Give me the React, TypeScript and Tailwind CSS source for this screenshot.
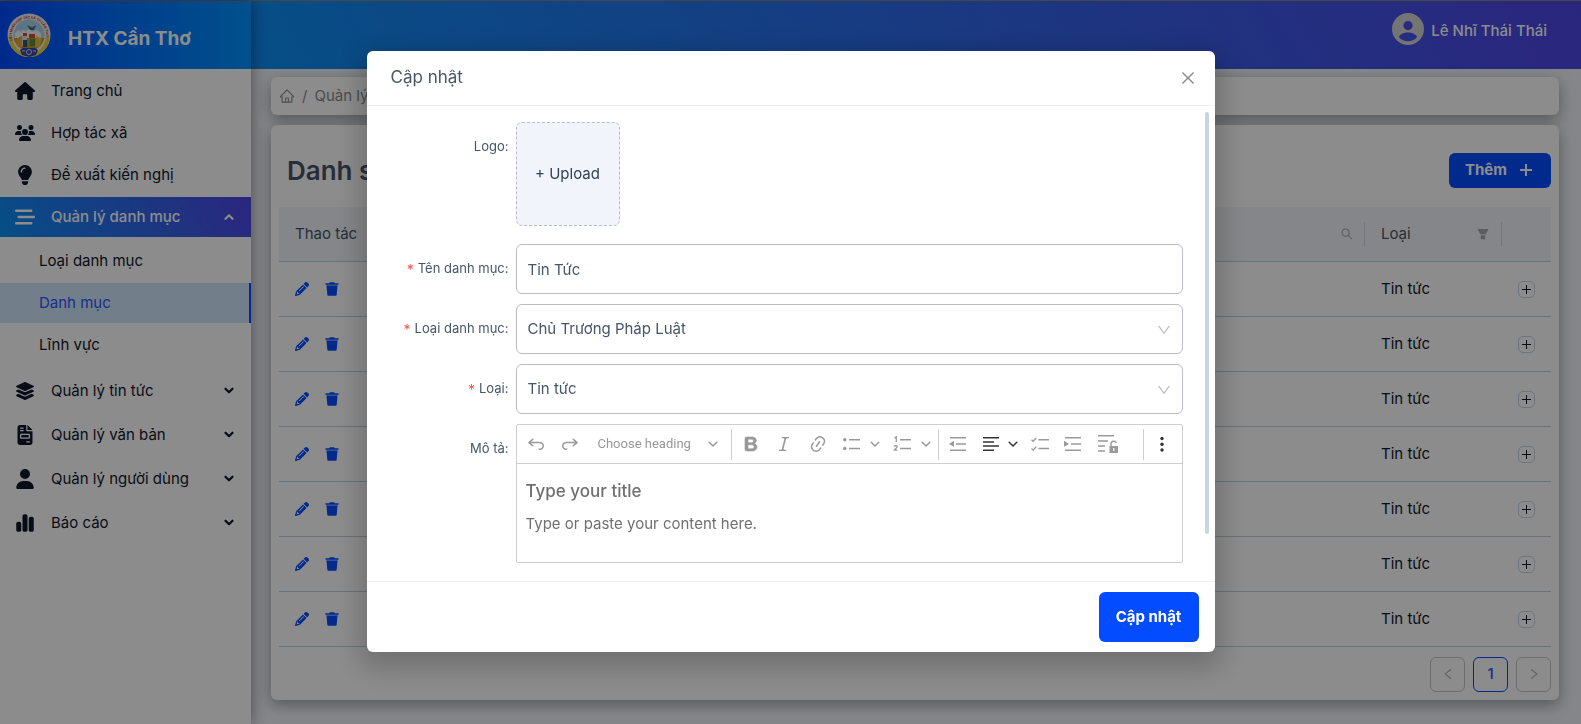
import React from "react";
import { AiOutlineHome, AiOutlineClose, AiOutlineDown, AiOutlineLeft, AiOutlineRight, AiOutlineSearch } from "react-icons/ai";
import {
  FaBarsStaggered, FaChartSimple, FaFileInvoice, FaHouse,
  FaLayerGroup, FaLightbulb, FaPencil, FaUser, FaUsers,
} from "react-icons/fa6";

type MenuEntry = { label: string; icon: React.ReactNode; children?: boolean };

const topMenu: MenuEntry[] = [
  { label: "Trang chủ", icon: <FaHouse /> },
  { label: "Hợp tác xã", icon: <FaUsers /> },
  { label: "Đề xuất kiến nghị", icon: <FaLightbulb /> },
];

const bottomMenu: MenuEntry[] = [
  { label: "Quản lý tin tức", icon: <FaLayerGroup />, children: true },
  { label: "Quản lý văn bản", icon: <FaFileInvoice />, children: true },
  { label: "Quản lý người dùng", icon: <FaUser />, children: true },
  { label: "Báo cáo", icon: <FaChartSimple />, children: true },
];

const subMenu = ["Loại danh mục", "Danh mục", "Lĩnh vực"];
const rows = [1, 2, 3, 4, 5, 6, 7];

function Logo() {
  return (
    <svg viewBox="0 0 44 44" className="size-11 shrink-0" aria-hidden="true">
      <circle cx="22" cy="22" r="21.5" fill="#f4f1ee" />
      <path d="M3.500 24a18.500 18.500 0 0 0 37 0" fill="none" stroke="#f0d436" strokeWidth="3.600" />
      <path id="logo-ring" d="M5.500 27.500a17.200 17.200 0 1 1 33 0" fill="none" />
      <text fontSize="3.300" fontWeight="700" fill="#c9302c">
        <textPath href="#logo-ring">LIÊN MINH HỢP TÁC XÃ TP CẦN THƠ</textPath>
      </text>
      <circle cx="22" cy="22" r="15.500" fill="#a9d3ee" />
      <path d="M8 20q3-5 6-1q2-4 5 0q3-6 6 0q5-4 9 1v6H8z" fill="#f3f7fa" />
      <path d="M20 12l5 2.500 4-2.500-2 5h-4z" fill="#3b6f82" />
      <path d="M6.800 25h30.400a15.500 15.500 0 0 1-30.400 0z" fill="#b39a36" />
      <path d="M8 27l6-4 4 3v8h-7z" fill="#e5a92c" />
      <path d="M29 23l6 3-2 8h-5z" fill="#e8bf3a" />
      <path d="M15 23h5v10h-5z" fill="#e6dcd8" />
      <path d="M22 21h6v4h-6zM16 20h4v3h-4z" fill="#cf4a40" />
      <path d="M23 26h5v7h-5z" fill="#5e8a3a" />
      <path d="M16 27h4v7h-4z" fill="#31527e" />
      <path d="M13 37l3-2h12l3 2-2 5-7 2-7-2z" fill="#3548a8" />
      <circle cx="22" cy="39" r="2.500" fill="none" stroke="#d5dbef" />
      <path d="M15 38h3M26 38h3" stroke="#d5dbef" />
    </svg>
  );
}

function Chevron({ up }: { up?: boolean }) {
  return (
    <svg viewBox="0 0 10 10" className="size-[10px]" fill="none" stroke="currentColor" strokeWidth="2.200" strokeLinecap="round" strokeLinejoin="round" aria-hidden="true">
      <path d={up ? "M1.500 6.800 5 3.300l3.500 3.500" : "M1.500 2.700 5 6.200l3.500-3.500"} />
    </svg>
  );
}

function TrashIcon() {
  return (
    <svg viewBox="0 0 14 14" className="size-[14px]" fill="currentColor" aria-hidden="true">
      <path d="M.500 1.200h3.700L5 .200h4l.800 1h3.700v1.600H.500z" />
      <path d="M1.200 2.600h11.600v1H1.200z" opacity=".4" />
      <path d="M1.500 3.600h11l-.800 9.200q-.100 1-1.100 1H3.400q-1 0-1.100-1z" />
    </svg>
  );
}

function MenuItem({ item }: { item: MenuEntry }) {
  return (
    <a href="#" className="flex h-10 items-center pr-[17px] pl-[15px] text-[15px] text-slate-900">
      <span className="mr-4 flex w-5 justify-center text-[20px]">{item.icon}</span>
      <span className="flex-1">{item.label}</span>
      {item.children && <Chevron />}
    </a>
  );
}

function Sidebar() {
  return (
    <aside className="z-10 w-[251px] shrink-0 bg-white shadow-[0_0_15px_rgba(0,0,0,0.45)]">
      <div className="flex h-[68px] items-center gap-[17px] bg-linear-to-r from-[#004cff] to-[#0591ff] pl-[7px]">
        <Logo />
        <span className="pt-2 text-[19px] font-bold text-white">HTX Cần Thơ</span>
      </div>
      <nav className="pt-[2px]">
        <div className="flex flex-col gap-[2px]">
          {topMenu.map((item) => <MenuItem key={item.label} item={item} />)}
          <a href="#" className="flex h-10 items-center bg-linear-[60deg,#0c8ff5,#4f46e5] pr-[17px] pl-[15px] text-[15px] font-medium text-white">
            <FaBarsStaggered className="mr-4 size-5" />
            <span className="flex-1">Quản lý danh mục</span>
            <Chevron up />
          </a>
        </div>
        <div className="mt-1 mb-[6px] flex flex-col gap-[2px] text-[15px]">
          {subMenu.map((label) => (
            <a
              key={label}
              href="#"
              className={label === "Danh mục"
                ? "flex h-10 items-center border-r-2 border-[#044cff] bg-[#d0e6fc] pl-[39px] text-[#2f54ff]"
                : "flex h-10 items-center pl-[39px] text-slate-900"}
            >
              {label}
            </a>
          ))}
        </div>
        <div className="flex flex-col gap-1">
          {bottomMenu.map((item) => <MenuItem key={item.label} item={item} />)}
        </div>
      </nav>
    </aside>
  );
}

function Listing() {
  return (
    <section className="rounded-md bg-white px-2 pb-2 shadow-[0_5px_15px_rgba(0,0,0,0.35)]">
      <div className="flex h-[82px] items-center justify-between pt-2">
        <h1 className="pl-2 text-[26px] font-semibold text-[#475569]">Danh sách</h1>
        <button type="button" className="flex h-[35px] items-center gap-[10px] rounded-md bg-[#044cff] px-4 text-[15px] font-bold text-white">
          Thêm
          <svg viewBox="0 0 16 16" className="mx-px size-4" stroke="currentColor" strokeWidth="2" aria-hidden="true">
            <path d="M8 2v12M2 8h12" />
          </svg>
        </button>
      </div>
      <table className="w-full table-fixed border-collapse text-[15px]">
        <thead>
          <tr className="h-[54px] border-b border-[#b9d3ee] bg-[#f1f5f9] text-left text-[#475569]">
            <th className="w-[120px] px-4 font-normal">Thao tác</th>
            <th className="p-0 font-normal">
              <div className="flex h-6 items-center justify-end border-r border-slate-300 pr-[10px]">
                <AiOutlineSearch className="size-[14px] text-[#a5a8ad]" />
              </div>
            </th>
            <th className="w-[137px] p-0 font-normal">
              <div className="flex h-6 items-center justify-between border-r border-slate-300 pr-3 pl-4">
                Loại
                <svg viewBox="0 0 12 12" className="size-3" fill="#a5a8ad" aria-hidden="true">
                  <path d="M.500 1h11L8.800 6.200H3.200zM3.800 7.200h4.400v4H3.800z" />
                </svg>
              </div>
            </th>
            <th className="w-[49px]" aria-label="Mở rộng" />
          </tr>
        </thead>
        <tbody>
          {rows.map((row) => (
            <tr key={row} className="h-[55px] border-b border-[#b9d3ee] text-slate-900">
              <td className="px-4">
                <div className="flex items-center gap-4 text-[#044cff]">
                  <button type="button" aria-label="Sửa"><FaPencil className="size-[14px]" /></button>
                  <button type="button" aria-label="Xóa"><TrashIcon /></button>
                </div>
              </td>
              <td />
              <td className="px-4 pt-[2px]">Tin tức</td>
              <td className="pt-[2px]">
                <button type="button" aria-label="Mở rộng" className="mx-auto flex size-[17px] items-center justify-center rounded-[5px] border border-slate-300">
                  <svg viewBox="0 0 9 9" className="size-[9px]" stroke="currentColor" aria-hidden="true">
                    <path d="M4.500 0v9M0 4.500h9" />
                  </svg>
                </button>
              </td>
            </tr>
          ))}
        </tbody>
      </table>
      <div className="mt-[10px] flex justify-end gap-2 text-[15px]">
        <button type="button" aria-label="Trang trước" className="flex size-[35px] items-center justify-center rounded-md border border-[#c5c7cb] text-[#b0b0b0]"><AiOutlineLeft className="size-[14px]" /></button>
        <button type="button" className="size-[35px] rounded-md border border-[#044cff] font-medium text-[#2f54ff]">1</button>
        <button type="button" aria-label="Trang sau" className="flex size-[35px] items-center justify-center rounded-md border border-[#c5c7cb] text-[#b0b0b0]"><AiOutlineRight className="size-[14px]" /></button>
      </div>
    </section>
  );
}

function Field({ id, label, required, children }: {
  id: string; label: string; required?: boolean; children: React.ReactNode;
}) {
  return (
    <div className="flex gap-[7px]">
      <label htmlFor={id} className="flex h-[50px] w-[118px] shrink-0 items-center justify-end text-[13px] text-[#475569]">
        {required && <span className="mr-1 text-[14px] text-[#ff4d4f]">*</span>}
        {label}:
      </label>
      <div className="min-w-0 flex-1">{children}</div>
    </div>
  );
}

const box = "h-[50px] w-full appearance-none rounded-md border border-[#b9bcc4] bg-white px-[11px] text-[15px] text-[#475569]";

function SelectBox({ id, value }: { id: string; value: string }) {
  return (
    <div className="relative">
      <select id={id} className={box} defaultValue={value}>
        <option>{value}</option>
      </select>
      <AiOutlineDown className="pointer-events-none absolute top-[18px] right-[11px] size-4 text-[#bfbfbf]" />
    </div>
  );
}

function Caret({ dark }: { dark?: boolean }) {
  return (
    <svg viewBox="0 0 10 10" className={dark ? "size-[10px] text-[#333]" : "size-[10px] text-[#999]"} fill="none" stroke="currentColor" strokeWidth="1.5" strokeLinecap="round" strokeLinejoin="round" aria-hidden="true">
      <path d="M1.200 3.300 5 7l3.800-3.700" />
    </svg>
  );
}

function Tool({ name, className, children }: { name: string; className?: string; children: React.ReactNode }) {
  return (
    <button type="button" aria-label={name} className={`flex shrink-0 items-center text-[#999] ${className ?? ""}`}>
      <svg viewBox="0 0 20 20" className="size-5" fill="currentColor" aria-hidden="true">{children}</svg>
    </button>
  );
}

const undoPath = "m5.042 9.367 2.189 1.837a.75.75 0 0 1-.965 1.149l-3.788-3.180a.747.747 0 0 1-.210-.284.750.750 0 0 1 .170-.945L6.230 4.762a.75.75 0 1 1 .964 1.150L4.863 7.866h8.917A.75.75 0 0 1 14 7.900a4 4 0 1 1-1.477 7.718l.344-1.489a2.500 2.500 0 1 0 1.094-4.730l.008-.032H5.042z";

function Editor() {
  return (
    <div className="rounded-xs border border-[#ccced1]">
      <div className="flex h-[39px] items-center overflow-hidden border-b border-[#ccced1]">
        <Tool name="Hoàn tác" className="ml-[9px]"><path d={undoPath} /></Tool>
        <Tool name="Làm lại" className="ml-[14px]"><path d={undoPath} transform="matrix(-1 0 0 1 20 0)" /></Tool>
        <button type="button" className="ml-[18px] flex w-[120px] shrink-0 items-center justify-between font-['Roboto',sans-serif] text-[13px] text-[#999]">
          Choose heading <Caret />
        </button>
        <span className="ml-[13px] h-[31px] w-px shrink-0 bg-[#ccced1]" />
        <Tool name="Đậm" className="ml-[9px]">
          <path d="M10.187 17H5.773c-.637 0-1.092-.138-1.364-.415-.273-.277-.409-.718-.409-1.323V4.738c0-.617.140-1.062.419-1.332.279-.270.730-.406 1.354-.406h4.680c.690 0 1.288.041 1.793.124.506.083.960.242 1.360.478.341.197.644.447.906.750a3.262 3.262 0 0 1 .808 2.162c0 1.401-.722 2.426-2.167 3.075C15.050 10.175 16 11.315 16 13.010a3.756 3.756 0 0 1-2.296 3.504 6.100 6.100 0 0 1-1.517.377c-.571.073-1.238.110-2 .110zm-.217-6.217H7v4.087h3.069c1.977 0 2.965-.690 2.965-2.072 0-.707-.256-1.220-.768-1.537-.512-.319-1.277-.478-2.296-.478zM7 5.130v3.619h2.606c.729 0 1.292-.067 1.690-.200a1.600 1.600 0 0 0 .910-.765c.165-.267.247-.566.247-.897 0-.707-.260-1.176-.778-1.409-.519-.232-1.310-.348-2.375-.348H7z" stroke="currentColor" strokeWidth=".6" />
        </Tool>
        <Tool name="Nghiêng" className="ml-[13px]">
          <path d="m9.586 14.633.021.004c-.036.335.095.655.393.962.082.083.173.150.274.201h1.474a.6.6 0 1 1 0 1.200H5.304a.6.6 0 0 1 0-1.200h1.150c.474-.070.809-.182 1.005-.334.157-.122.291-.320.404-.597l2.416-9.550a1.053 1.053 0 0 0-.281-.823 1.120 1.120 0 0 0-.442-.296H8.150a.6.6 0 0 1 0-1.200h6.443a.6.6 0 1 1 0 1.200h-1.195c-.376.056-.650.155-.823.296-.215.175-.423.439-.623.790l-2.366 9.347z" />
        </Tool>
        <Tool name="Liên kết" className="ml-[14px]">
          <path d="m11.077 15 .991-1.416a.75.75 0 1 1 1.229.860l-1.148 1.640a.748.748 0 0 1-.217.206 5.251 5.251 0 0 1-8.503-5.955.741.741 0 0 1 .120-.274l1.147-1.639a.75.75 0 1 1 1.228.860L4.933 10.700l.006.003a3.750 3.750 0 0 0 6.132 4.294l.006.004zm5.494-5.335a.748.748 0 0 1-.120.274l-1.147 1.639a.75.75 0 1 1-1.228-.860l.860-1.230a3.750 3.750 0 0 0-6.144-4.301l-.860 1.229a.75.75 0 0 1-1.229-.860l1.148-1.640a.748.748 0 0 1 .217-.206 5.251 5.251 0 0 1 8.503 5.955zm-4.563-2.532a.75.75 0 0 1 .184 1.045l-3.155 4.505a.75.75 0 1 1-1.229-.860l3.155-4.506a.75.75 0 0 1 1.045-.184z" />
        </Tool>
        <Tool name="Danh sách dấu đầu dòng" className="ml-[14px]">
          <circle cx="2.800" cy="5.800" r="1.700" /><circle cx="2.800" cy="14.500" r="1.700" />
          <path d="M7 5h11v1.500H7zM7 13.800h11v1.500H7z" />
        </Tool>
        <span className="ml-2"><Caret /></span>
        <Tool name="Danh sách đánh số" className="ml-[13px]">
          <path d="M7 5h11v1.500H7zM7 13.800h11v1.500H7z" />
          <path d="M1.500 4 3.300 2.900V8M1.200 12.600c.500-1.400 3.300-1.300 2.900.300-.200 1-2.900 2.600-2.900 3.300h3.300" fill="none" stroke="currentColor" strokeWidth="1.300" />
        </Tool>
        <span className="ml-2"><Caret /></span>
        <span className="ml-[7px] h-[31px] w-px shrink-0 bg-[#ccced1]" />
        <Tool name="Giảm thụt lề" className="ml-[9px]">
          <path d="M2 3h16v1.500H2zM8 9.200h10v1.500H8zM2 15.500h16V17H2zM6 6.800v6L1 9.900z" />
        </Tool>
        <Tool name="Căn lề" className="ml-[13px] text-[#333]!">
          <path d="M2 3h16v1.500H2zM2 7.200h11v1.500H2zM2 11.300h16v1.500H2zM2 15.500h11V17H2z" />
        </Tool>
        <span className="ml-[7px]"><Caret dark /></span>
        <Tool name="Danh sách việc" className="ml-[12px]">
          <path d="M8.500 5h10.500v1.500H8.500zM8.500 13.800h10.500v1.500H8.500z" />
          <path d="m1.500 5.700 1.600 1.600L6.200 4M1.500 14.500l1.600 1.600 3.100-3.300" fill="none" stroke="currentColor" strokeWidth="1.300" />
        </Tool>
        <Tool name="Tăng thụt lề" className="ml-[13px]">
          <path d="M2 3h16v1.500H2zM8 9.200h10v1.500H8zM2 15.500h16V17H2zM1 6.800v6l5-2.900z" />
        </Tool>
        <Tool name="Hạn chế chỉnh sửa" className="ml-[15px]">
          <path d="M0 1h16v1.500H0zM0 6.200h10v1.500H0zM0 11.300h7v1.500H0zM0 16.200h7v1.500H0zM11.500 12H20v7h-8.500zM15.200 14v3h1.200v-3z" fillRule="evenodd" />
          <path d="M13 12V9.500c.300-3 5-3 5.300-.500" fill="none" stroke="currentColor" strokeWidth="1.400" />
        </Tool>
        <span className="ml-auto h-[31px] w-px shrink-0 bg-[#ccced1]" />
        <Tool name="Thêm mục" className="mr-[10px] ml-2 text-[#333]!">
          <circle cx="10" cy="4.500" r="1.700" /><circle cx="10" cy="10.200" r="1.700" /><circle cx="10" cy="16" r="1.700" />
        </Tool>
      </div>
      <div className="h-[98px] px-[9px] pt-3 text-[#707070]">
        <p className="text-[17px] leading-[30px] font-medium">Type your title</p>
        <p id="mota" className="mt-1 text-[15px] leading-[28px]">Type or paste your content here.</p>
      </div>
    </div>
  );
}

function Modal() {
  return (
    <div className="fixed inset-0 z-20 flex items-start justify-center bg-black/45 pt-[51px]">
      <div role="dialog" aria-labelledby="modal-title" className="relative w-[848px] max-w-full rounded-md bg-white shadow-[0_9px_28px_8px_rgba(0,0,0,0.2)]">
        <header className="flex h-[55px] items-center justify-between border-b border-[#f0f0f0] pr-[18px] pl-6">
          <h2 id="modal-title" className="text-[17px] text-[#475569]">Cập nhật</h2>
          <button type="button" aria-label="Đóng" className="text-[#8c8c8c]"><AiOutlineClose className="size-[18px]" /></button>
        </header>
        <form className="flex flex-col gap-[10px] pt-4 pr-8 pb-[18px] pl-6" onSubmit={(e) => e.preventDefault()}>
          <div className="mb-2">
            <Field id="logo" label="Logo">
              <button id="logo" type="button" className="size-[104px] rounded-md border border-dashed border-[#b9bcc4] bg-[#f1f5fb] text-[15px] text-[#334155]">+ Upload</button>
            </Field>
          </div>
          <Field id="ten" label="Tên danh mục" required>
            <input id="ten" className={box} defaultValue="Tin Tức" />
          </Field>
          <Field id="loaidm" label="Loại danh mục" required>
            <SelectBox id="loaidm" value="Chủ Trương Pháp Luật" />
          </Field>
          <Field id="loai" label="Loại" required>
            <SelectBox id="loai" value="Tin tức" />
          </Field>
          <Field id="mota" label="Mô tả"><Editor /></Field>
        </form>
        <footer className="flex justify-end border-t border-[#f0f0f0] px-4 py-[10px]">
          <button type="button" className="h-[50px] w-[100px] rounded-md bg-[#044cff] text-[15px] font-bold text-white">Cập nhật</button>
        </footer>
        <div className="absolute top-[61px] right-[6px] h-[422px] w-1 rounded-full bg-[#c7d5e5]" />
      </div>
    </div>
  );
}

export default function App() {
  return (
    <div className="flex min-h-screen flex-col border-t border-[#808080] bg-[#f1f4f9] font-['Inter','Noto_Sans',sans-serif]">
      <div className="flex flex-1">
        <Sidebar />
        <div className="flex min-w-0 flex-1 flex-col">
          <header className="flex h-[68px] items-start justify-end gap-[7px] bg-linear-[60deg,#0c8ff5,#4f46e5] pt-3 pr-[34px]">
            <svg viewBox="0 0 32 32" className="size-8" aria-hidden="true">
              <path fillRule="evenodd" fill="#d3d3d3" d="M16 0a16 16 0 1 1 0 32a16 16 0 0 1 0-32zm0 8a4.600 4.600 0 1 0 0 9.200A4.600 4.600 0 0 0 16 8zm0 11.500c-4 0-8.500 1.800-9 4.500c1.500 2.500 5 4.300 9 4.300s7.500-1.800 9-4.300c-.500-2.700-5-4.500-9-4.500z" />
            </svg>
            <span className="flex h-9 items-center text-[15px] font-medium text-white">Lê Nhĩ Thái Thái</span>
          </header>
          <main className="flex flex-col gap-[10px] pt-2 pr-[22px] pb-6 pl-5">
            <nav className="flex h-[38px] items-center gap-[7px] rounded-md bg-white px-2 text-[15px] text-[#8c8c8c] shadow-[0_5px_15px_rgba(0,0,0,0.35)]">
              <a href="#" aria-label="Trang chủ"><AiOutlineHome className="size-4" /></a>
              <span>/</span>
              <a href="#">Quản lý danh mục</a>
            </nav>
            <Listing />
          </main>
        </div>
      </div>
      <Modal />
    </div>
  );
}
